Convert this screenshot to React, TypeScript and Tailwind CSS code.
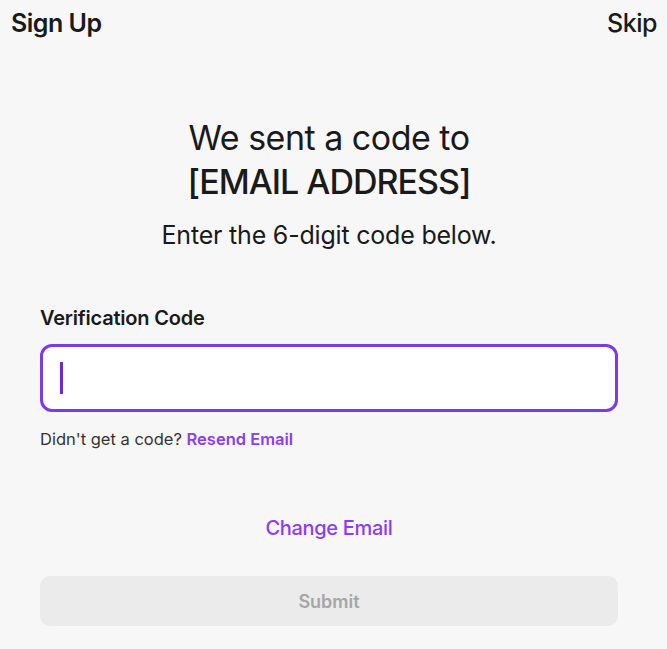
export default function App() {
  return (
    <main
      className="min-h-screen w-full bg-[#f7f7f7] text-[#1a1a1a]"
      style={{ fontFamily: "Inter, 'Noto Sans', sans-serif" }}
    >
      <header className="flex items-center justify-between pl-[11px] pr-[10px] pt-[8px]">
        <h1 className="text-[25px] font-semibold leading-[30px] tracking-[-0.5px]">Sign Up</h1>
        <button className="text-[25px] font-medium leading-[30px] tracking-[-0.5px]">Skip</button>
      </header>

      <div className="ml-[40px] w-[578px]">
        <div className="mt-[78px] text-center">
          <h2 className="text-[34px] font-normal leading-[44px] tracking-[-0.5px]">
            We sent a code to
            <br />
            <span className="font-medium tracking-[-1px]">[EMAIL ADDRESS]</span>
          </h2>
          <p className="mt-[16px] text-[25px] leading-[30px] tracking-[-0.2px]">
            Enter the 6-digit code below.
          </p>
        </div>

        <label className="mt-[54px] block text-[20px] font-semibold leading-[28px] tracking-[-0.2px]">
          Verification Code
        </label>
        <div className="relative mt-[12px] h-[68px] w-full rounded-[12px] border-[3px] border-[#7c3aed] bg-white">
          <span className="absolute left-[17px] top-[15px] h-[32px] w-[3px] bg-[#6d28d9]" />
        </div>

        <p className="mt-[16px] text-[16.5px] leading-[22px] text-[#333333]">
          Didn't get a code?{" "}
          <a className="font-semibold text-[#8b3cf5]">Resend Email</a>
        </p>

        <div className="mt-[64px] text-center">
          <a className="text-[20px] font-medium leading-[28px] tracking-[-0.3px] text-[#8b3cf5]">
            Change Email
          </a>
        </div>

        <button
          disabled
          className="mt-[34px] h-[50px] w-full rounded-[10px] bg-[#ebebeb] text-[18px] font-semibold text-[#a6a6a6]"
        >
          Submit
        </button>
      </div>
    </main>
  );
}
